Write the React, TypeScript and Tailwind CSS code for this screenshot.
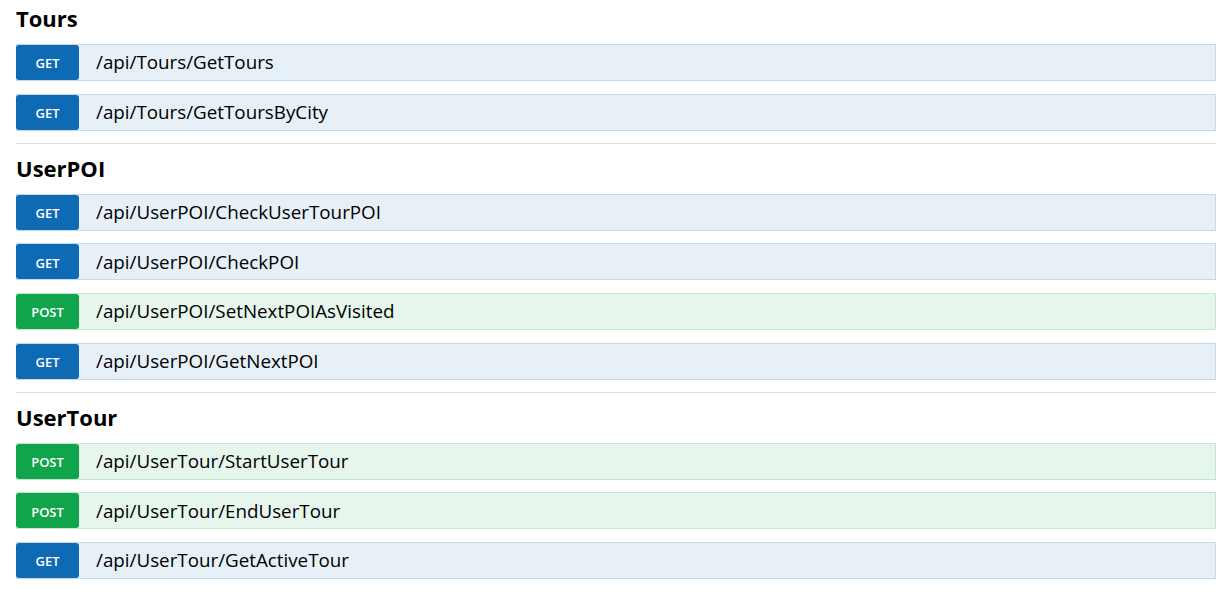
type Method = 'GET' | 'POST';

interface Endpoint {
  method: Method;
  path: string;
}

interface Group {
  name: string;
  endpoints: Endpoint[];
}

const groups: Group[] = [
  {
    name: 'Tours',
    endpoints: [
      { method: 'GET', path: '/api/Tours/GetTours' },
      { method: 'GET', path: '/api/Tours/GetToursByCity' },
    ],
  },
  {
    name: 'UserPOI',
    endpoints: [
      { method: 'GET', path: '/api/UserPOI/CheckUserTourPOI' },
      { method: 'GET', path: '/api/UserPOI/CheckPOI' },
      { method: 'POST', path: '/api/UserPOI/SetNextPOIAsVisited' },
      { method: 'GET', path: '/api/UserPOI/GetNextPOI' },
    ],
  },
  {
    name: 'UserTour',
    endpoints: [
      { method: 'POST', path: '/api/UserTour/StartUserTour' },
      { method: 'POST', path: '/api/UserTour/EndUserTour' },
      { method: 'GET', path: '/api/UserTour/GetActiveTour' },
    ],
  },
];

function EndpointRow({ endpoint }: { endpoint: Endpoint }) {
  const isGet = endpoint.method === 'GET';
  return (
    <div
      className={
        isGet
          ? 'flex h-[37px] items-stretch border border-[#c3d9ec] bg-[#e7f0f7]'
          : 'flex h-[37px] items-stretch border border-[#c3e8d1] bg-[#e7f6ec]'
      }
    >
      <span
        className={
          isGet
            ? '-ml-px flex w-[63px] items-center justify-center rounded-[3px] bg-[#0f6ab4] pt-[3px] text-[13px] font-semibold text-white'
            : '-ml-px flex w-[63px] items-center justify-center rounded-[3px] bg-[#10a54a] pt-[3px] text-[13px] font-semibold text-white'
        }
      >
        {endpoint.method}
      </span>
      <span className="flex items-center pl-[17px] text-[18.8px] text-black">{endpoint.path}</span>
    </div>
  );
}

export default function App() {
  return (
    <div className="min-h-screen bg-white px-4 font-['Open_Sans',sans-serif]">
      <div className="w-[1200px]">
        {groups.map((group, i) => (
          <section key={group.name} className={i > 0 ? 'border-t border-[#e0e0e0] pt-[6px]' : ''}>
            <h2 className="flex h-[44px] items-start pt-[3px] text-[22px] leading-[30px] font-bold text-black">
              {group.name}
            </h2>
            <div className="flex flex-col gap-[12.67px] pb-[12px]">
              {group.endpoints.map((ep) => (
                <EndpointRow key={ep.path} endpoint={ep} />
              ))}
            </div>
          </section>
        ))}
      </div>
    </div>
  );
}
